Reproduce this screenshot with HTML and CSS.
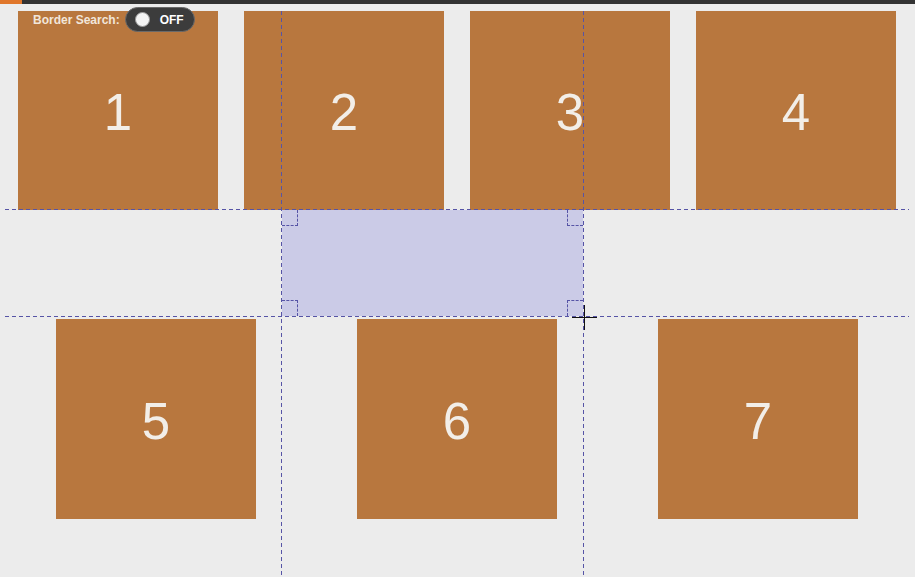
FILE: index.html
```html
<!DOCTYPE html>
<html lang="en">
<head>
  <meta charset="UTF-8">
  <meta name="viewport" content="width=device-width, initial-scale=1.0">
  <title>Border Search</title>
  <link rel="stylesheet" href="styles.css">
</head>
<body>
  <div class="topbar"><span class="accent"></span></div>
  <div class="stage">
    <div class="row row-top">
      <div class="box">1</div>
      <div class="box">2</div>
      <div class="box">3</div>
      <div class="box">4</div>
    </div>
    <div class="row row-bottom">
      <div class="box">5</div>
      <div class="box">6</div>
      <div class="box">7</div>
    </div>

    <div class="search">
      <span class="search-label">Border Search:</span>
      <span class="toggle"><span class="knob"></span>OFF</span>
    </div>

    <div class="guide-h guide-top"></div>
    <div class="guide-h guide-bottom"></div>
    <div class="guide-v guide-left"></div>
    <div class="guide-v guide-right"></div>

    <div class="selection">
      <span class="corner tl"></span>
      <span class="corner tr"></span>
      <span class="corner bl"></span>
      <span class="corner br"></span>
    </div>

    <div class="cursor"></div>
  </div>
</body>
</html>
```

FILE: styles.css
```css
*{
  margin: 0px;
  padding: 0px;
  box-sizing: border-box;
}
body{
  background-color: #ececec;
  font-family: "Liberation Sans", Arial, sans-serif;
  width: 915px;
  height: 577px;
  overflow: hidden;
}
.topbar{
  height: 4px;
  background-color: #333333;
  display: flex;
}
.accent{
  width: 22px;
  background-color: #e0762a;
}
.stage{
  position: relative;
  height: 573px;
}
.row{
  display: flex;
}
.row-top{
  padding: 7px 0 0 18px;
  gap: 26px;
}
.row-bottom{
  padding: 109px 0 0 56px;
  gap: 101px;
}
.box{
  width: 200px;
  height: 199px;
  background-color: #b8773e;
  color: #f2eee8;
  font-size: 51px;
  display: flex;
  align-items: center;
  justify-content: center;
  padding-top: 4px;
}
.row-bottom .box{
  height: 200px;
}

/* overlay: search toggle */
.search{
  position: absolute;
  left: 33px;
  top: 3px;
  display: flex;
  align-items: center;
  gap: 5px;
  font-size: 12px;
  font-weight: bold;
  color: #f1e6da;
}
.toggle{
  width: 70px;
  height: 25px;
  border-radius: 13px;
  background-color: #3c3c3c;
  border: 1px solid #6a6a6a;
  display: flex;
  align-items: center;
  gap: 10px;
  padding-left: 9px;
  color: #ffffff;
  font-size: 12px;
}
.knob{
  width: 15px;
  height: 15px;
  border-radius: 50%;
  background-color: #f4f4f4;
  border: 1px solid #9a9a9a;
}

/* overlay: guides */
.guide-h{
  position: absolute;
  left: 5px;
  width: 904px;
  height: 1px;
  background: repeating-linear-gradient(to right, #5654a6 0 4px, transparent 4px 7px);
}
.guide-top{ top: 205px; }
.guide-bottom{ top: 312px; }
.guide-v{
  position: absolute;
  top: 7px;
  bottom: 0;
  width: 1px;
  background: repeating-linear-gradient(to bottom, #5654a6 0 4px, transparent 4px 7px);
}
.guide-left{ left: 281px; }
.guide-right{ left: 583px; }

.selection{
  position: absolute;
  left: 282px;
  top: 206px;
  width: 301px;
  height: 106px;
  background-color: rgba(190, 190, 228, 0.72);
}
.corner{
  position: absolute;
  width: 16px;
  height: 16px;
  border: 1px dashed #5654a6;
}
.tl{ left: 0; top: 0; border-left: none; border-top: none; }
.tr{ right: 0; top: 0; border-right: none; border-top: none; }
.bl{ left: 0; bottom: 0; border-left: none; border-bottom: none; }
.br{ right: 0; bottom: 0; border-right: none; border-bottom: none; }

.cursor{
  position: absolute;
  left: 572px;
  top: 301px;
  width: 25px;
  height: 25px;
}
.cursor::before,
.cursor::after{
  content: "";
  position: absolute;
  background-color: #111111;
}
.cursor::before{
  left: 0;
  top: 12px;
  width: 25px;
  height: 1px;
}
.cursor::after{
  left: 12px;
  top: 0;
  width: 1px;
  height: 25px;
}
```
